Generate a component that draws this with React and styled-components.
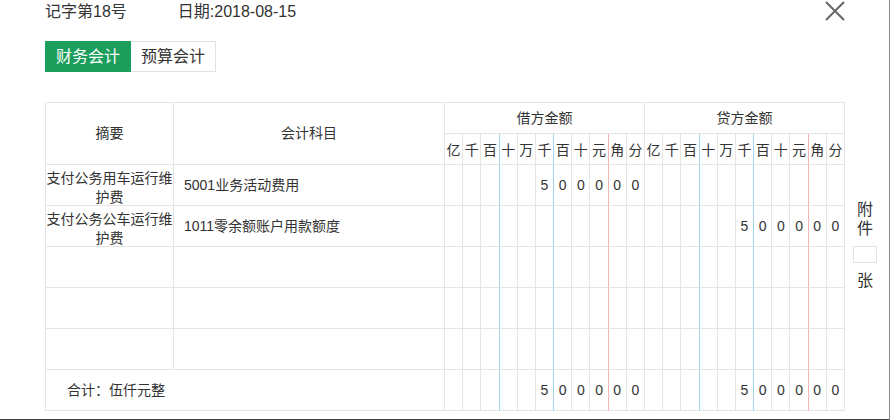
import React from "react";
import styled, { createGlobalStyle } from "styled-components";

const Global = createGlobalStyle`
  html, body { margin: 0; padding: 0; background: #fff; }
  body { font-family: "Liberation Sans", "Noto Sans CJK SC", sans-serif; color: #333; }
  * { box-sizing: border-box; }
`;

const Frame = styled.div`
  width: 890px;
  height: 420px;
  border-right: 1px solid #8c8c8c;
  border-bottom: 1px solid #444;
  padding: 0 0 0 45px;
  overflow: hidden;
`;

const Header = styled.div`
  display: flex;
  align-items: flex-start;
  width: 800px;
  height: 24px;
`;

const HeadText = styled.span`
  font-size: 16px;
  line-height: 24px;
  color: #333;
  margin-right: ${(p) => p.$gap || 0}px;
`;

const Close = styled.button`
  margin-left: auto;
  margin-top: 1px;
  width: 20px;
  height: 20px;
  padding: 0;
  border: 0;
  background: none;
  display: block;
  cursor: pointer;
  svg { display: block; }
`;

const Tabs = styled.div`
  display: flex;
  margin-top: 17px;
`;

const Tab = styled.div`
  height: 31px;
  padding: 0 10px;
  font-size: 16px;
  line-height: 29px;
  border: 1px solid ${(p) => (p.$active ? "#1b9e5c" : "#e2e2e2")};
  background: ${(p) => (p.$active ? "#1b9e5c" : "#fff")};
  color: ${(p) => (p.$active ? "#fff" : "#333")};
  & + & { border-left: 0; }
`;

const Body = styled.div`
  display: flex;
  margin-top: 30px;
`;

const Grid = styled.div`
  width: 800px;
  display: grid;
  grid-template-columns: 128px 271px repeat(22, 1fr);
  grid-template-rows: 31px 31px repeat(6, 41px);
  border-top: 1px solid #e5e5e5;
  border-left: 1px solid #e5e5e5;
  font-size: 14px;
  color: #333;
`;

const Cell = styled.div`
  border-right: 1px solid #e5e5e5;
  border-bottom: 1px solid #e5e5e5;
  display: flex;
  align-items: center;
  justify-content: ${(p) => (p.$left ? "flex-start" : "center")};
  text-align: ${(p) => (p.$left ? "left" : "center")};
  padding-left: ${(p) => p.$pl || 0}px;
  grid-column: ${(p) => (p.$span ? `span ${p.$span}` : "auto")};
  grid-row: ${(p) => (p.$rows ? `span ${p.$rows}` : "auto")};
  line-height: 19px;
  min-width: 0;
`;

const Summary = styled(Cell)`
  padding-top: 5px;
`;

const Digit = styled.div`
  border-right: 1px solid
    ${(p) => (p.$line === "blue" ? "#a3d3f3" : p.$line === "red" ? "#f1b4b4" : "#e5e5e5")};
  border-bottom: 1px solid #e5e5e5;
  display: flex;
  align-items: center;
  justify-content: center;
  font-size: 14px;
  min-width: 0;
`;

const Side = styled.div`
  width: 24px;
  margin-left: 8px;
  padding-top: 98px;
  display: flex;
  flex-direction: column;
  align-items: center;
  font-size: 16px;
  line-height: 19px;
  color: #333;
`;

const SideText = styled.span`
  display: block;
  width: 16px;
  text-align: center;
  word-break: break-all;
`;

const Count = styled.input`
  width: 24px;
  height: 17px;
  margin: 8px 0 8px;
  border: 1px solid #e3e3e3;
  padding: 0;
  outline: none;
`;

const UNITS = ["亿", "千", "百", "十", "万", "千", "百", "十", "元", "角", "分"];
const lineFor = (i) => (i === 2 || i === 5 ? "blue" : i === 8 ? "red" : undefined);

const spread = (s) => {
  const arr = Array(11).fill("");
  if (!s) return arr;
  const chars = s.split("");
  const start = 11 - chars.length;
  chars.forEach((c, i) => (arr[start + i] = c));
  return arr;
};

const DigitGroup = ({ value, keyPrefix }) =>
  spread(value).map((d, i) => (
    <Digit key={keyPrefix + i} $line={lineFor(i)}>
      {d}
    </Digit>
  ));

const rows = [
  { summary: "支付公务用车运行维护费", account: "5001业务活动费用", debit: "500000", credit: "" },
  { summary: "支付公务公车运行维护费", account: "1011零余额账户用款额度", debit: "", credit: "500000" },
  { summary: "", account: "", debit: "", credit: "" },
  { summary: "", account: "", debit: "", credit: "" },
  { summary: "", account: "", debit: "", credit: "" },
];

export default function App() {
  return (
    <>
      <Global />
      <Frame>
        <Header>
          <HeadText $gap={51}>记字第18号</HeadText>
          <HeadText>日期:2018-08-15</HeadText>
          <Close aria-label="关闭">
            <svg width="20" height="20" viewBox="0 0 20 20">
              <path d="M1 1 L19 19 M19 1 L1 19" stroke="#666" strokeWidth="2" fill="none" />
            </svg>
          </Close>
        </Header>
        <Tabs>
          <Tab $active>财务会计</Tab>
          <Tab>预算会计</Tab>
        </Tabs>
        <Body>
          <Grid>
            <Cell $rows={2}>摘要</Cell>
            <Cell $rows={2}>会计科目</Cell>
            <Cell $span={11}>借方金额</Cell>
            <Cell $span={11}>贷方金额</Cell>
            {UNITS.map((u, i) => (
              <Digit key={"dh" + i} $line={lineFor(i)}>{u}</Digit>
            ))}
            {UNITS.map((u, i) => (
              <Digit key={"ch" + i} $line={lineFor(i)}>{u}</Digit>
            ))}
            {rows.map((r, ri) => (
              <React.Fragment key={ri}>
                <Summary>{r.summary}</Summary>
                <Cell $left $pl={10}>{r.account}</Cell>
                <DigitGroup value={r.debit} keyPrefix={`d${ri}-`} />
                <DigitGroup value={r.credit} keyPrefix={`c${ri}-`} />
              </React.Fragment>
            ))}
            <Cell $span={2} $left $pl={21}>合计：伍仟元整</Cell>
            <DigitGroup value="500000" keyPrefix="td" />
            <DigitGroup value="500000" keyPrefix="tc" />
          </Grid>
          <Side>
            <SideText>附件</SideText>
            <Count />
            <SideText>张</SideText>
          </Side>
        </Body>
      </Frame>
    </>
  );
}
